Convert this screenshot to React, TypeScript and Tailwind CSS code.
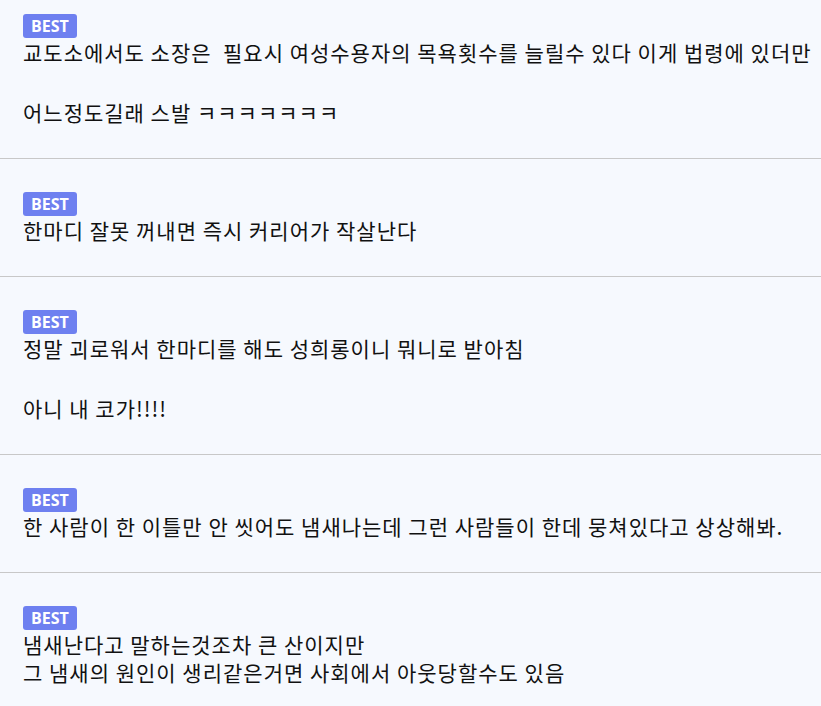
import React from "react"

type Comment = { lines: string[] }

const comments: Comment[] = [
  { lines: ["교도소에서도 소장은  필요시 여성수용자의 목욕횟수를 늘릴수 있다 이게 법령에 있더만", "", "어느정도길래 스발 ㅋㅋㅋㅋㅋㅋㅋ"] },
  { lines: ["한마디 잘못 꺼내면 즉시 커리어가 작살난다"] },
  { lines: ["정말 괴로워서 한마디를 해도 성희롱이니 뭐니로 받아침", "", "아니 내 코가!!!!"] },
  { lines: ["한 사람이 한 이틀만 안 씻어도 냄새나는데 그런 사람들이 한데 뭉쳐있다고 상상해봐."] },
  { lines: ["냄새난다고 말하는것조차 큰 산이지만", "그 냄새의 원인이 생리같은거면 사회에서 아웃당할수도 있음"] },
]

function BestBadge() {
  return (
    <div className="flex h-[24px] w-[54px] items-center justify-center rounded-[3px] bg-[#6e80f0] text-[16px] font-bold leading-none text-white [font-family:'Open_Sans','Liberation_Sans',sans-serif]">
      BEST
    </div>
  )
}

function App() {
  return (
    <div className="min-h-screen bg-[#f6f9fe] text-[#111] [font-family:'Noto_Sans_CJK_KR',sans-serif]">
      {comments.map((c, i) => (
        <div
          key={i}
          className={`border-b border-[#c8c8c8] px-[23px] ${i === 0 ? "pt-[14px]" : "pt-[33px]"} pb-[32px] last:border-b-0`}
        >
          <BestBadge />
          <div className="text-[21px] leading-[28px] tracking-[1px]">
            {c.lines.map((l, j) =>
              l === "" ? <div key={j} className="h-[32px]" /> : <div key={j} className="whitespace-pre">{l}</div>
            )}
          </div>
        </div>
      ))}
    </div>
  )
}

export default App
